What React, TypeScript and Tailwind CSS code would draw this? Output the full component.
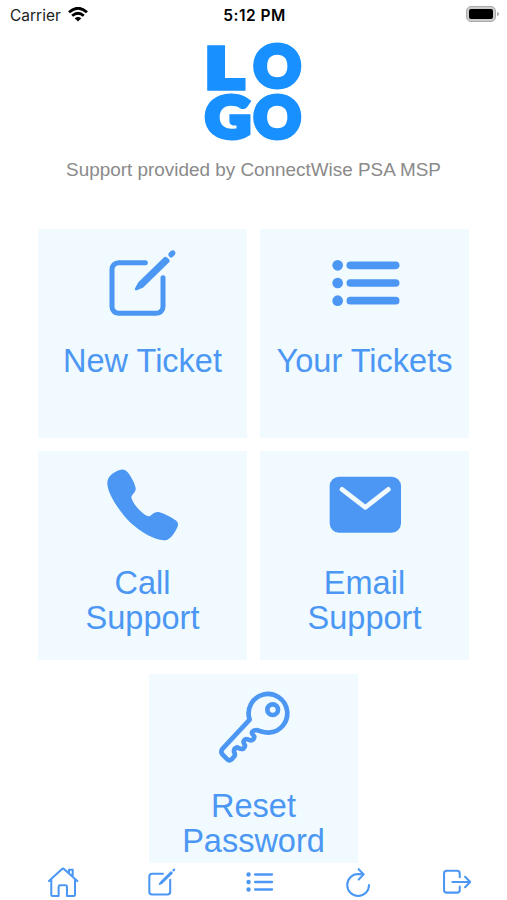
import type { ReactNode } from 'react';

type IconProps = { className?: string };

function Icon({ className, width = 15, children }: IconProps & { width?: number; children: ReactNode }) {
  return (
    <svg
      viewBox="0 0 264 264"
      className={className}
      fill="none"
      stroke="currentColor"
      strokeWidth={width}
      strokeLinecap="round"
      strokeLinejoin="round"
    >
      {children}
    </svg>
  );
}

const CreateIcon = ({ className }: IconProps) => (
  <Icon className={className}>
    <path d="M139 71H59a20 20 0 0 0-20 20V203a20 20 0 0 0 20 20H172a20 20 0 0 0 20-20V116" />
    <path
      d="M196 54 118 130 108 148q-2 8 5 6L132 146 211 69q3-5-4-11-6-6-11-4ZM212 39q7-8 14-4 6 6 1 13l-7 7q-5 2-9-2-4-4-3-9Z"
      fill="currentColor"
      stroke="none"
    />
  </Icon>
);

const ListIcon = ({ className }: IconProps) => (
  <Icon className={className} width={23}>
    {[79, 132, 185].map((y) => (
      <g key={y}>
        <circle cx="50" cy={y} r="16" fill="currentColor" stroke="none" />
        <path d={`M88 ${y}H224`} />
      </g>
    ))}
  </Icon>
);

const ListOutlineIcon = ({ className }: IconProps) => (
  <Icon className={className} width={17}>
    {[77, 132, 187].map((y) => (
      <g key={y}>
        <circle cx="48" cy={y} r="16" fill="currentColor" stroke="none" />
        <path d={`M96 ${y}H220`} />
      </g>
    ))}
  </Icon>
);

const CallIcon = ({ className }: IconProps) => (
  <Icon className={className}>
    <path
      d="M62 27C72 23 80 26 86 34C97 48 108 68 110 82C111 96 97 100 97 110C103 130 129 160 148 166C157 166 162 153 176 153C190 154 218 169 230 178C238 185 239 192 234 201C226 217 218 230 205 236C180 245 130 218 93 184C58 147 25 97 25 67C25 46 44 33 62 27Z"
      fill="currentColor"
      stroke="none"
    />
  </Icon>
);

const MailIcon = ({ className }: IconProps) => (
  <Icon className={className} width={14}>
    <rect x="26" y="47" width="214" height="168" rx="28" fill="currentColor" stroke="none" />
    <path d="M63 85 133 139 202 85" className="stroke-[#f0faff]" />
  </Icon>
);

const KeyIcon = ({ className }: IconProps) => (
  <Icon className={className} width={14}>
    <path d="M119 107 38 194Q30 203 38 212L52 226Q58 232 66 225L73 217Q77 211 72 204Q71 193 82 190Q91 197 100 194Q108 187 103 180C97 171 105 163 113 166C124 173 131 168 133 159C134 154 124 152 126 145C130 137 143 137 151 142Q164 146 176 146A58 58 0 1 0 119 107Z" />
    <circle cx="188" cy="77" r="16" />
  </Icon>
);

const HomeIcon = ({ className }: IconProps) => (
  <Icon className={className}>
    <path d="M29 125 125 37q7-6 14 0L237 125M46 110V225q0 10 10 10H100V166q0-10 10-10h41q10 0 10 10V235H210q10 0 10-10V110M176 66V42H203V93" />
  </Icon>
);

const RefreshIcon = ({ className }: IconProps) => (
  <Icon className={className}>
    <path d="M213 154A80 80 0 1 1 133 74L172 76M137 38 174 76 137 114" />
  </Icon>
);

const LogoutIcon = ({ className }: IconProps) => (
  <Icon className={className}>
    <path d="M152 97V69q0-20-20-20H57q-20 0-20 20V190q0 20 20 20h75q20 0 20-20V166M98 132H229M191 94 229 132 191 170" />
  </Icon>
);

const WifiIcon = () => (
  <svg viewBox="0 0 20 15" className="-mt-0.5 h-[15px] w-5" fill="none" stroke="black" strokeWidth="2.8">
    <path d="M1 5.3Q10-2.8 19 5.3M4.2 8.8Q10 3.6 15.8 8.8" />
    <path d="M10 14.5 6.7 11.2Q10 8.6 13.3 11.2Z" fill="black" stroke="none" />
  </svg>
);

const Logo = () => (
  <svg
    viewBox="0 0 100 100"
    className="h-[100px] w-[100px] overflow-visible fill-[#1890ff] stroke-[#1890ff] font-['Lato'] text-[58px] font-black"
    strokeWidth="5"
  >
    <text transform="translate(2 47.5) scale(1.2 1)" className="font-['Inter']" strokeWidth="3.4">
      L
    </text>
    <text x="49.7" y="46.4">O</text>
    <text transform="translate(1.3 96.7) scale(1.08 1)">G</text>
    <text x="49.7" y="96.7">O</text>
  </svg>
);

const tiles = [
  { label: 'New Ticket', icon: CreateIcon },
  { label: 'Your Tickets', icon: ListIcon },
  { label: 'Call\nSupport', icon: CallIcon },
  { label: 'Email\nSupport', icon: MailIcon },
  { label: 'Reset\nPassword', icon: KeyIcon },
];

const tabs = [
  { label: 'Home', icon: HomeIcon },
  { label: 'New', icon: CreateIcon },
  { label: 'Tickets', icon: ListOutlineIcon },
  { label: 'Refresh', icon: RefreshIcon },
  { label: 'Log out', icon: LogoutIcon },
];

export default function App() {
  return (
    <div className="flex h-[900px] w-[507px] flex-col overflow-hidden bg-white font-['Liberation_Sans',sans-serif]">
      <header className="grid h-[30px] shrink-0 grid-cols-3 items-center pt-px pr-2 pl-2.5 font-['Inter',sans-serif] text-[15.5px] text-[#222]">
        <div className="flex items-center gap-[7px]">
          <span>Carrier</span>
          <WifiIcon />
        </div>
        <span className="text-center font-semibold tracking-[0.5px] text-black">5:12 PM</span>
        <div className="flex items-center justify-end gap-px pb-[3px]">
          <div className="h-4 w-[30px] rounded-[5px] border border-[#aaa] bg-[#ccc] p-[2px]">
            <div className="h-full rounded-[2px] bg-black" />
          </div>
          <div className="h-1 w-0.5 rounded-r bg-[#aaa]" />
        </div>
      </header>

      <main className="flex min-h-0 grow flex-col items-center overflow-hidden">
        <div className="mt-[11px] shrink-0">
          <Logo />
        </div>
        <p className="mt-[17px] shrink-0 text-[18.9px] leading-6 whitespace-nowrap text-[#8a8a8a]">
          Support provided by ConnectWise PSA MSP
        </p>
        <div className="mt-[46.5px] flex w-[440px] shrink-0 flex-wrap justify-center gap-x-[13px] gap-y-[13.5px]">
          {tiles.map(({ label, icon: TileIcon }) => (
            <button
              key={label}
              className="flex h-[209px] w-[209px] flex-col items-center bg-[#f0faff] pt-2.5 text-[#4b97f3]"
            >
              <TileIcon className="h-[88px] w-[88px] shrink-0" />
              <span className="mt-[17px] text-[32.5px] leading-[35px] whitespace-pre-line">{label}</span>
            </button>
          ))}
        </div>
      </main>

      <nav className="grid h-[37px] shrink-0 grid-cols-[98px_99px_98px_97px_101px] bg-white pl-3.5 text-[#4b97f3]">
        {tabs.map(({ label, icon: TabIcon }) => (
          <button key={label} aria-label={label} className="flex items-center justify-center">
            <TabIcon className="h-9 w-9" />
          </button>
        ))}
      </nav>
    </div>
  );
}
